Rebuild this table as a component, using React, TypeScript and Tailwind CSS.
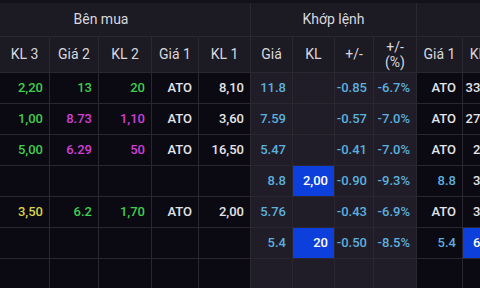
import React from "react";

type Cell = { v?: string; c?: string; blue?: boolean };

const G = "text-[#3fcf4d]";
const M = "text-[#d23fd8]";
const Y = "text-[#d6d445]";
const W = "text-[#e4e4e8]";
const B = "text-[#5bb0de]";

const leftW = [48, 50, 49, 53, 47, 51];
const midW = [42, 42, 39, 42];
const rightW = [46, 42, 50];

const leftRows: Cell[][] = [
  [{}, { v: "2,20", c: G }, { v: "13", c: G }, { v: "20", c: G }, { v: "ATO", c: W }, { v: "8,10", c: W }],
  [{}, { v: "1,00", c: G }, { v: "8.73", c: M }, { v: "1,10", c: M }, { v: "ATO", c: W }, { v: "3,60", c: W }],
  [{}, { v: "5,00", c: G }, { v: "6.29", c: M }, { v: "50", c: M }, { v: "ATO", c: W }, { v: "16,50", c: W }],
  [{}, {}, {}, {}, {}, {}],
  [{}, { v: "3,50", c: Y }, { v: "6.2", c: G }, { v: "1,70", c: G }, { v: "ATO", c: W }, { v: "2,00", c: W }],
  [{}, {}, {}, {}, {}, {}],
  [{}, {}, {}, {}, {}, {}],
];

const midRows: Cell[][] = [
  [{ v: "11.8", c: B }, {}, { v: "-0.85", c: B }, { v: "-6.7%", c: B }],
  [{ v: "7.59", c: B }, {}, { v: "-0.57", c: B }, { v: "-7.0%", c: B }],
  [{ v: "5.47", c: B }, {}, { v: "-0.41", c: B }, { v: "-7.0%", c: B }],
  [{ v: "8.8", c: B }, { v: "2,00", c: "text-white", blue: true }, { v: "-0.90", c: B }, { v: "-9.3%", c: B }],
  [{ v: "5.76", c: B }, {}, { v: "-0.43", c: B }, { v: "-6.9%", c: B }],
  [{ v: "5.4", c: B }, { v: "20", c: "text-white", blue: true }, { v: "-0.50", c: B }, { v: "-8.5%", c: B }],
  [{}, {}, {}, {}],
];

const rightRows: Cell[][] = [
  [{ v: "ATO", c: W }, { v: "33,40", c: W }, {}],
  [{ v: "ATO", c: W }, { v: "27,80", c: W }, {}],
  [{ v: "ATO", c: W }, { v: "2,10", c: W }, {}],
  [{ v: "8.8", c: B }, { v: "3,60", c: W }, {}],
  [{ v: "ATO", c: W }, { v: "3,30", c: W }, {}],
  [{ v: "5.4", c: B }, { v: "6,70", c: "text-white", blue: true }, {}],
  [{}, {}, {}],
];

function DataCell({ cell, w, last }: { cell: Cell; w: number; last?: boolean }) {
  return (
    <div
      style={{ width: w }}
      className={`shrink-0 h-full flex items-center justify-end pr-[6px] border-b border-[#2a2731] ${last ? "border-r-0" : "border-r"} ${
        cell.blue ? "bg-[#0c3fdc]" : ""
      } ${cell.c ?? ""}`}
    >
      {cell.v}
    </div>
  );
}

function Section({
  title,
  heads,
  widths,
  rows,
  dataBg,
}: {
  title: string;
  heads: React.ReactNode[];
  widths: number[];
  rows: Cell[][];
  dataBg: string;
}) {
  return (
    <div className="flex flex-col shrink-0 border-r border-[#2a2731]">
      <div className="h-[34px] flex items-center justify-center bg-[#1c1a23] border-b border-[#2a2731] text-[#d9d8de] text-[14px] font-normal">
        {title}
      </div>
      <div className="h-[36px] flex bg-[#1c1a23] border-b border-[#2a2731]">
        {heads.map((h, i) => (
          <div
            key={i}
            style={{ width: widths[i] }}
            className={`shrink-0 flex items-center justify-center text-center leading-[15px] text-[#d9d8de] text-[14px] font-normal ${
              i < heads.length - 1 ? "border-r border-[#2a2731]" : ""
            }`}
          >
            {h}
          </div>
        ))}
      </div>
      {rows.map((r, ri) => (
        <div key={ri} className={`h-[31px] flex ${dataBg}`}>
          {r.map((c, ci) => (
            <DataCell key={ci} cell={c} w={widths[ci]} last={ci === r.length - 1} />
          ))}
        </div>
      ))}
    </div>
  );
}

export default function App() {
  return (
    <div
      className="w-[480px] h-[288px] overflow-hidden bg-[#0b0911] border-t-[3px] border-[#13111a]"
      style={{ fontFamily: "Roboto, 'Liberation Sans', sans-serif" }}
    >
      <div className="flex ml-[-48px] text-[13px] font-medium">
        <Section
          title="Bên mua"
          heads={["", "KL 3", "Giá 2", "KL 2", "Giá 1", "KL 1"]}
          widths={leftW}
          rows={leftRows}
          dataBg="bg-[#0b0911]"
        />
        <Section
          title="Khớp lệnh"
          heads={[
            "Giá",
            "KL",
            "+/-",
            <span key="p">
              +/-
              <br />
              (%)
            </span>,
          ]}
          widths={midW}
          rows={midRows}
          dataBg="bg-[#211d28]"
        />
        <Section
          title=""
          heads={["Giá 1", "KL 1", ""]}
          widths={rightW}
          rows={rightRows}
          dataBg="bg-[#0b0911]"
        />
      </div>
    </div>
  );
}
